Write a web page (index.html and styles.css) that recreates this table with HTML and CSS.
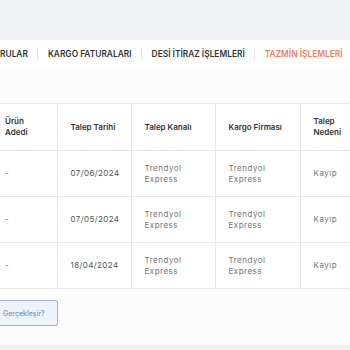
FILE: index.html
```html
<!DOCTYPE html>
<html lang="tr">
<head>
<meta charset="utf-8">
<link rel="stylesheet" href="styles.css">
</head>
<body>
<div class="topband"></div>
<nav class="tabs">
  <span class="tab first">RULAR</span>
  <span class="sep"></span>
  <span class="tab">KARGO FATURALARI</span>
  <span class="sep"></span>
  <span class="tab">DESİ İTİRAZ İŞLEMLERİ</span>
  <span class="sep"></span>
  <span class="tab active">TAZMİN İŞLEMLERİ</span>
</nav>
<main class="content">
  <table class="grid">
    <colgroup>
      <col class="c1"><col class="c2"><col class="c3"><col class="c4"><col class="c5">
    </colgroup>
    <thead>
      <tr>
        <th class="first">Ürün<br>Adedi</th>
        <th>Talep Tarihi</th>
        <th>Talep Kanalı</th>
        <th>Kargo Firması</th>
        <th>Talep<br>Nedeni</th>
      </tr>
    </thead>
    <tbody>
      <tr>
        <td class="first">-</td>
        <td class="date">07/06/2024</td>
        <td>Trendyol<br>Express</td>
        <td>Trendyol<br>Express</td>
        <td>Kayıp</td>
      </tr>
      <tr>
        <td class="first">-</td>
        <td class="date">07/05/2024</td>
        <td>Trendyol<br>Express</td>
        <td>Trendyol<br>Express</td>
        <td>Kayıp</td>
      </tr>
      <tr>
        <td class="first">-</td>
        <td class="date">18/04/2024</td>
        <td>Trendyol<br>Express</td>
        <td>Trendyol<br>Express</td>
        <td>Kayıp</td>
      </tr>
    </tbody>
  </table>
  <div class="actions">
    <button class="btn">Gerçekleşir?</button>
  </div>
</main>
<div class="bottomband"></div>
</body>
</html>
```
FILE: styles.css
```css
* { box-sizing: border-box; }
html, body {
  margin: 0;
  padding: 0;
  background: #fcfcfc;
  font-family: Inter, "Noto Sans", sans-serif;
  overflow: hidden;
  width: 350px;
  height: 350px;
}
.topband {
  height: 40px;
  background: #f1f2f5;
}
.tabs {
  height: 28px;
  background: #ffffff;
  display: flex;
  align-items: center;
  white-space: nowrap;
  overflow: hidden;
}
.tab {
  font-size: 8.4px;
  font-weight: 600;
  color: #353535;
}
.tab.active { color: #e8825a; }
.sep {
  width: 1px;
  height: 12px;
  background: #e6e6e6;
  margin: 0 10px 0 9px;
}
.content {
  padding-top: 35px;
  height: 277px;
  overflow: hidden;
}
.grid {
  border-collapse: collapse;
  table-layout: fixed;
  width: 370px;
  font-size: 8px;
}
.c1 { width: 57px; }
.c2 { width: 74px; }
.c3 { width: 84px; }
.c4 { width: 85px; }
.c5 { width: 70px; }
.grid th, .grid td {
  border: 1px solid #e8e8e8;
  text-align: left;
  vertical-align: middle;
  padding: 0 0 0 13px;
  line-height: 11px;
}
.grid th {
  height: 47px;
  font-weight: 600;
  color: #333;
  background: #ffffff;
}
.grid td {
  height: 46px;
  color: #767676;
  font-weight: 400;
  letter-spacing: 0.5px;
  background: #ffffff;
}
.grid .first {
  padding-left: 5px;
  border-left: none;
}
.grid td.date {
  color: #555;
  letter-spacing: 0.4px;
}
.actions {
  padding-top: 11px;
}
.btn {
  display: block;
  width: 58px;
  height: 26px;
  border: 1px solid #a3b1cc;
  border-left: none;
  border-radius: 0 3px 3px 0;
  background: #eef2fa;
  color: #7d93c6;
  font-family: inherit;
  font-size: 7px;
  font-weight: 500;
  padding: 0 0 0 3px;
  text-align: left;
}
.bottomband {
  height: 5px;
  background: #f1f2f5;
}
```
